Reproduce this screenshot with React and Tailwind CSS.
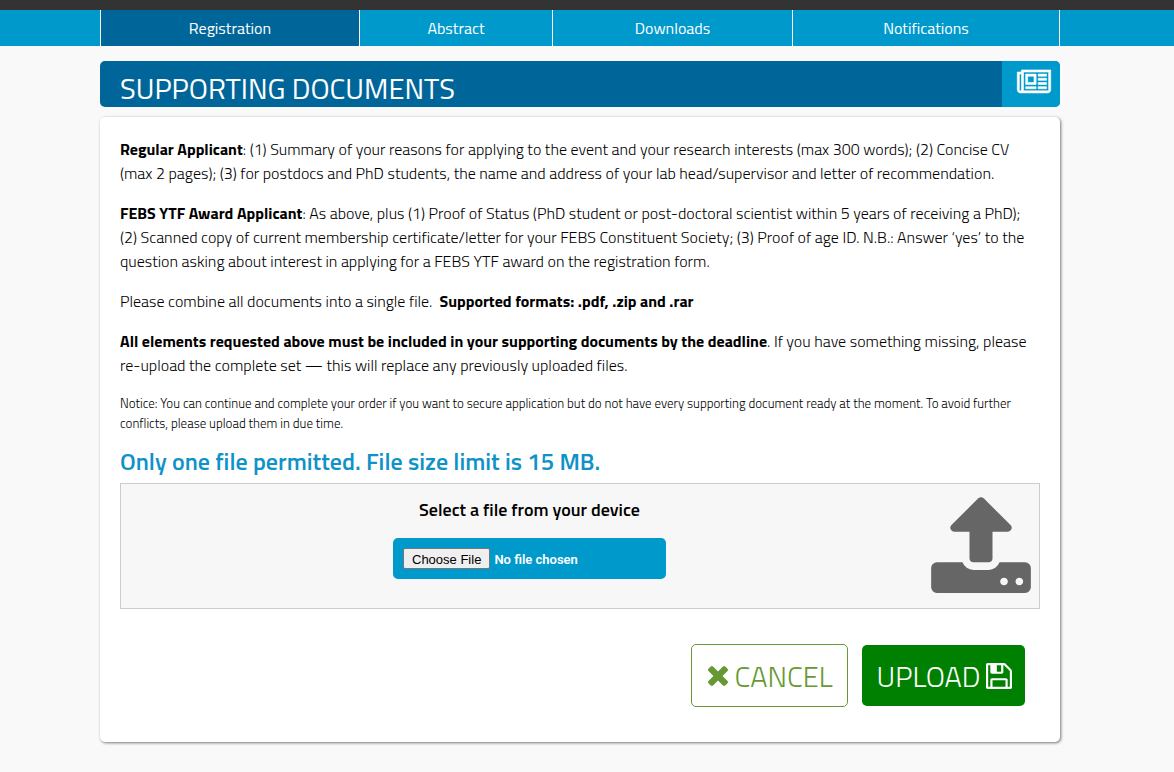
const tabs = [
  { label: 'Registration', active: true },
  { label: 'Abstract' },
  { label: 'Downloads' },
  { label: 'Notifications' },
];

function NewspaperIcon() {
  return (
    <svg viewBox="0 256 2048 1408" className="h-[23px] w-[34px] overflow-visible fill-current stroke-current stroke-[36]" aria-hidden="true">
      <path d="M1024 512h-384v384h384v-384zm128 640v128h-640v-128h640zm0-768v640h-640v-640h640zm640 768v128h-512v-128h512zm0-256v128h-512v-128h512zm0-256v128h-512v-128h512zm0-256v128h-512v-128h512zm-1536 960v-960h-128v960q0 26 19 45t45 19 45-19 19-45zm1664 0v-1088h-1536v1088q0 33-11 64h1483q26 0 45-19t19-45zm128-1216v1216q0 80-56 136t-136 56h-1664q-80 0-136-56t-56-136v-1088h256v-128h1792z" />
    </svg>
  );
}

function UploadIcon() {
  return (
    <svg viewBox="64 45 1664 1619" className="h-[97px] w-[100px] fill-[#666666]" aria-hidden="true">
      <path d="M1344 1472q0-26-19-45t-45-19-45 19-19 45 19 45 45 19 45-19 19-45zm256 0q0-26-19-45t-45-19-45 19-19 45 19 45 45 19 45-19 19-45zm128-224v320q0 40-28 68t-68 28h-1472q-40 0-68-28t-28-68v-320q0-40 28-68t68-28h427q21 56 70.5 92t110.5 36h256q61 0 110.5-36t70.5-92h427q40 0 68 28t28 68zm-325-648q-17 40-59 40h-256v448q0 26-19 45t-45 19h-256q-26 0-45-19t-19-45v-448h-256q-42 0-59-40-17-39 14-69l448-448q18-19 45-19t45 19l448 448q31 30 14 69z" />
    </svg>
  );
}

function CloseIcon() {
  return (
    <svg viewBox="302 366 1188 1188" className="size-5 fill-current" aria-hidden="true">
      <path d="M1490 1322q0 40-28 68l-136 136q-28 28-68 28t-68-28l-294-294-294 294q-28 28-68 28t-68-28l-136-136q-28-28-28-68t28-68l294-294-294-294q-28-28-28-68t28-68l136-136q28-28 68-28t68 28l294 294 294-294q28-28 68-28t68 28l136 136q28 28 28 68t-28 68l-294 294 294 294q28 28 28 68z" />
    </svg>
  );
}

function FloppyIcon() {
  return (
    <svg viewBox="128 128 1536 1536" className="size-[26px] fill-current" aria-hidden="true">
      <path d="M512 1536h768v-384h-768v384zm896 0h128v-896q0-14-10-38.5t-20-34.5l-281-281q-10-10-34-20t-39-10v416q0 40-28 68t-68 28h-576q-40 0-68-28t-28-68v-416h-128v1280h128v-416q0-40 28-68t68-28h832q40 0 68 28t28 68v416zm-384-928v-320q0-13-9.5-22.5t-22.5-9.5h-192q-13 0-22.5 9.5t-9.5 22.5v320q0 13 9.5 22.5t22.5 9.5h192q13 0 22.5-9.5t9.5-22.5zm640 32v928q0 40-28 68t-68 28h-1344q-40 0-68-28t-28-68v-1344q0-40 28-68t68-28h928q40 0 88 20t76 48l280 280q28 28 48 76t20 88z" />
    </svg>
  );
}

export default function App() {
  return (
    <div className="min-h-screen bg-[#f9f9f9] font-['Titillium_Web',Roboto,sans-serif] text-black">
      <header className="border-t-10 border-[#333333] bg-[#0099cc] pr-[14px]">
        <nav className="mx-auto grid max-w-[960px] grid-cols-[259fr_193fr_240fr_267fr] border-l border-white">
          {tabs.map((tab) => (
            <a
              key={tab.label}
              href="#"
              aria-current={tab.active ? 'page' : undefined}
              className={`flex h-9 items-center justify-center border-r border-white text-base text-white ${tab.active ? 'bg-[#006699]' : ''}`}
            >
              {tab.label}
            </a>
          ))}
        </nav>
      </header>

      <div className="pr-[14px] pb-[30px]">
        <main className="mx-auto max-w-[960px] pt-[15px]">
          <div className="flex h-[46px] rounded-[5px] bg-[#006699] text-white">
            <h1 className="flex-1 pt-[11px] pl-5 text-[29px] leading-8 font-normal">SUPPORTING DOCUMENTS</h1>
            <div className="flex w-[58px] justify-center rounded-r-[5px] bg-[#0099cc] pt-[11px] pl-[6px]">
              <NewspaperIcon />
            </div>
          </div>

          <section className="mt-[10px] rounded-[5px] bg-white px-5 pt-5 pb-[35px] shadow-[1px_1px_3px_#777777]">
            <div className="flex flex-col gap-4 text-base leading-6 font-light">
              <p>
                <strong className="font-bold">Regular Applicant</strong>: (1) Summary of your reasons for applying to the event
                and your research interests (max 300 words); (2) Concise CV (max 2 pages); (3) for postdocs and PhD students, the
                name and address of your lab head/supervisor and letter of recommendation.
              </p>
              <p>
                <strong className="font-bold">FEBS YTF Award Applicant</strong>: As above, plus (1) Proof of Status (PhD student
                or post-doctoral scientist within 5 years of receiving a PhD);<br />
                (2) Scanned copy of current membership certificate/letter for your FEBS Constituent Society; (3) Proof of age ID.
                N.B.: Answer ‘yes’ to the<br />
                question asking about interest in applying for a FEBS YTF award on the registration form.
              </p>
              <p>
                Please combine all documents into a single file.&nbsp;{' '}
                <strong className="font-bold">Supported formats: .pdf, .zip and .rar</strong>
              </p>
              <p>
                <strong className="font-bold">
                  All elements requested above must be included in your supporting documents by the deadline
                </strong>
                . If you have something missing, please re-upload the complete set — this will replace any previously uploaded
                files.
              </p>
              <p className="text-[13px] leading-5">
                Notice: You can continue and complete your order if you want to secure application but do not have every supporting
                document ready at the moment. To avoid further conflicts, please upload them in due time.
              </p>
            </div>

            <h2 className="mt-3 text-2xl leading-8 font-semibold text-[#0f92c8]">
              Only one file permitted. File size limit is 15 MB.
            </h2>

            <div className="mt-[6px] flex border border-[#cccccc] bg-[#f7f7f7] pr-2 pb-[13px]">
              <div className="flex flex-1 flex-col items-center pt-[14px] pl-[7px]">
                <label htmlFor="document" className="text-lg leading-6 font-semibold">
                  Select a file from your device
                </label>
                <input
                  id="document"
                  type="file"
                  className="mt-4 mb-4 h-[41px] w-[273px] rounded-[5px] bg-[#0099cc] p-[10px] font-[Roboto,sans-serif] text-[13px] leading-[21px] font-semibold text-white file:mr-1 file:h-[21px] file:rounded-[2px] file:border file:border-solid file:border-[#767676] file:bg-[#efefef] file:px-2 file:font-['Liberation_Sans',Arial,sans-serif] file:font-normal file:text-black"
                />
              </div>
              <div className="pt-3">
                <UploadIcon />
              </div>
            </div>

            <div className="mt-[35px] flex items-center justify-end gap-[14px] pr-[15px]">
              <button
                type="button"
                className="flex h-[63px] w-[157px] items-center justify-center gap-[6px] rounded-[5px] border border-[#669933] bg-white pt-px pl-[2px] text-[29px] leading-8 font-light text-[#669933]"
              >
                <CloseIcon />
                CANCEL
              </button>
              <button
                type="button"
                className="flex h-[61px] w-[163px] items-center justify-center gap-[6px] rounded-[5px] bg-[#008000] pt-px pl-[2px] text-[29px] leading-8 font-light text-white"
              >
                UPLOAD
                <FloppyIcon />
              </button>
            </div>
          </section>
        </main>
      </div>
    </div>
  );
}
